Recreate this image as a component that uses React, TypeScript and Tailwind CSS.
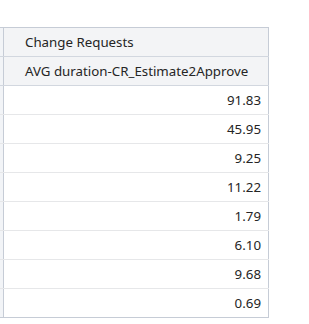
import React from 'react';

const values = ['91.83', '45.95', '9.25', '11.22', '1.79', '6.10', '9.68', '0.69'];

const App = () => {
  return (
    <div
      className="w-[309px] h-[324px] bg-white pt-[27px] text-[13.3px] text-[#252525]"
      style={{ fontFamily: '"Noto Sans", "Open Sans", sans-serif' }}
    >
      <div className="flex flex-col w-[269px] border-t border-[#c6ccd6]">
        {/* header rows */}
        <div className="flex h-[29px] border-b border-[#d2d7df] bg-[#f3f4f6]">
          <div className="w-[4px] bg-[#f2f4f7] border-r border-[#c6ccd6]" />
          <div className="flex-1 flex items-center pl-[21px] pt-[2px] border-r border-[#c6ccd6]">
            Change Requests
          </div>
        </div>
        <div className="flex h-[29px] border-b border-[#d2d7df] bg-[#f3f4f6]">
          <div className="w-[4px] bg-[#f2f4f7] border-r border-[#c6ccd6]" />
          <div className="flex-1 flex items-center pl-[21px] pt-[2px] border-r border-[#c6ccd6]">
            AVG duration-CR_Estimate2Approve
          </div>
        </div>

        {/* data rows */}
        {values.map((v, i) => (
          <div
            key={i}
            className={
              i === values.length - 1
                ? 'flex h-[29px] border-b border-[#c6ccd6]'
                : 'flex h-[29px] border-b border-[#e6e7e9]'
            }
          >
            <div className="w-[4px] bg-[#f2f4f7] border-r border-[#c6ccd6]" />
            <div className="flex-1 flex items-center justify-end pr-[7px] pt-[2px] border-r border-[#c6ccd6]">
              {v}
            </div>
          </div>
        ))}
      </div>
    </div>
  );
};

export default App;
